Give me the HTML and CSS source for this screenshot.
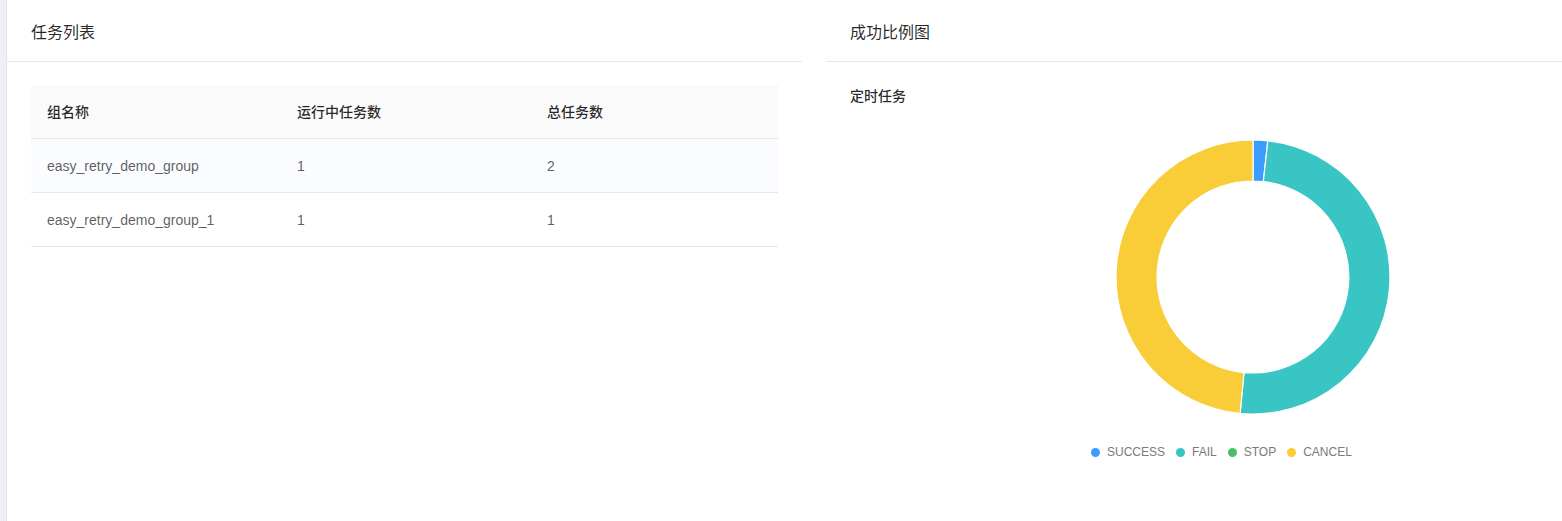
FILE: index.html
```html
<!DOCTYPE html>
<html lang="zh-CN">
<head>
    <meta charset="UTF-8">
    <meta name="viewport" content="width=device-width, initial-scale=1.0">
    <title>任务概览</title>
    <link rel="stylesheet" href="styles.css">
</head>
<body>

    <div class="side-strip"></div>

    <div class="board">
        <!-- 任务列表 -->
        <div class="card">
            <div class="card-head">任务列表</div>
            <div class="card-body">
                <table class="group-table">
                    <thead>
                        <tr>
                            <th>组名称</th>
                            <th>运行中任务数</th>
                            <th>总任务数</th>
                        </tr>
                    </thead>
                    <tbody>
                        <tr class="row-hover">
                            <td>easy_retry_demo_group</td>
                            <td>1</td>
                            <td>2</td>
                        </tr>
                        <tr>
                            <td>easy_retry_demo_group_1</td>
                            <td>1</td>
                            <td>1</td>
                        </tr>
                    </tbody>
                </table>
            </div>
        </div>

        <!-- 成功比例图 -->
        <div class="card">
            <div class="card-head">成功比例图</div>
            <div class="card-body">
                <div class="chart-title">定时任务</div>
                <div class="chart">
                    <svg class="donut" width="276" height="276" viewBox="0 0 276 276">
                        <path fill="#3b9bff" stroke="#fff" stroke-width="1.2"
                              d="M138 1 A137 137 0 0 1 152.8 1.8 L148.37 42.56 A96 96 0 0 0 138 42 Z"/>
                        <path fill="#38c5c3" stroke="#fff" stroke-width="1.2"
                              d="M152.8 1.8 A137 137 0 0 1 125.11 274.39 L128.97 233.57 A96 96 0 0 0 148.37 42.56 Z"/>
                        <path fill="#f8cd37" stroke="#fff" stroke-width="1.2"
                              d="M125.11 274.39 A137 137 0 0 1 138 1 L138 42 A96 96 0 0 0 128.97 233.57 Z"/>
                    </svg>
                    <ul class="legend">
                        <li><span class="dot dot-success"></span>SUCCESS</li>
                        <li><span class="dot dot-fail"></span>FAIL</li>
                        <li><span class="dot dot-stop"></span>STOP</li>
                        <li><span class="dot dot-cancel"></span>CANCEL</li>
                    </ul>
                </div>
            </div>
        </div>
    </div>

</body>
</html>
```

FILE: styles.css
```css
body {
    margin: 0;
    display: flex;
    min-height: 100vh;
    background-color: #ffffff;
    font-family: "Helvetica Neue", "Liberation Sans", "Noto Sans CJK SC", sans-serif;
    color: rgba(0, 0, 0, 0.65);
    font-size: 14px;
}

.side-strip {
    width: 6px;
    flex: none;
    background-color: #eff0f5;
    border-right: 1px solid #e4e5ea;
}

.board {
    flex: 1;
    display: grid;
    grid-template-columns: 795fr 736fr;
    column-gap: 24px;
    align-items: start;
}

/* --- card --- */
.card {
    background-color: #ffffff;
}

.card-head {
    padding: 21px 24px 16px;
    font-size: 16px;
    line-height: 24px;
    color: rgba(0, 0, 0, 0.85);
    border-bottom: 1px solid #e8e8e8;
}

.card-body {
    padding: 23px 24px 24px;
}

/* --- table --- */
.group-table {
    width: 100%;
    border-collapse: collapse;
    table-layout: fixed;
}

.group-table th,
.group-table td {
    padding: 17px 16px 15px;
    line-height: 21px;
    text-align: left;
    border-bottom: 1px solid #e8e8e8;
}

.group-table th {
    background-color: #fafafa;
    font-weight: 500;
    color: rgba(0, 0, 0, 0.85);
}

.group-table th:nth-child(1),
.group-table th:nth-child(2) {
    width: 218px;
}

.group-table .row-hover td {
    background-color: #fafcff;
}

/* --- chart --- */
.chart-title {
    font-size: 14px;
    line-height: 22px;
    font-weight: 500;
    color: rgba(0, 0, 0, 0.85);
}

.chart {
    padding-top: 32px;
}

.donut {
    display: block;
    margin-left: 265px;
}

.legend {
    list-style: none;
    margin: 30px 0 0 241px;
    padding: 0;
    display: flex;
    gap: 11px;
    font-size: 12px;
    line-height: 14px;
    color: #7a7a7a;
}

.legend li {
    display: flex;
    align-items: center;
}

.dot {
    width: 9px;
    height: 9px;
    border-radius: 50%;
    margin-right: 7px;
}

.dot-success { background-color: #3b9bff; }
.dot-fail    { background-color: #38c5c3; }
.dot-stop    { background-color: #4ac066; }
.dot-cancel  { background-color: #f8cd37; }
```
